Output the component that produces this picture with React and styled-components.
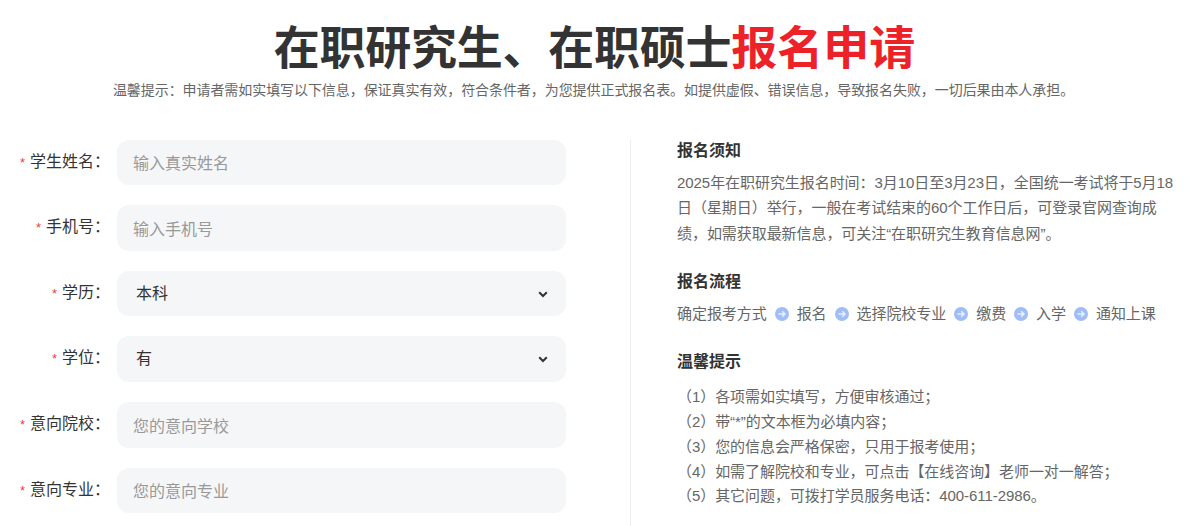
import React from 'react';
import styled, { createGlobalStyle } from 'styled-components';

const GlobalStyle = createGlobalStyle`
  html, body {
    margin: 0;
    padding: 0;
    height: 526px;
    overflow: hidden;
    background: #fff;
    font-family: "Liberation Sans", "Noto Sans CJK SC", sans-serif;
  }
`;

const fields = [
  { label: '学生姓名', placeholder: '输入真实姓名' },
  { label: '手机号', placeholder: '输入手机号' },
  { label: '学历', options: ['本科', '专科', '硕士'] },
  { label: '学位', options: ['有', '无'] },
  { label: '意向院校', placeholder: '您的意向学校' },
  { label: '意向专业', placeholder: '您的意向专业' },
];

const steps = ['确定报考方式', '报名', '选择院校专业', '缴费', '入学', '通知上课'];

const tips = [
  '（1）各项需如实填写，方便审核通过；',
  '（2）带“*”的文本框为必填内容；',
  '（3）您的信息会严格保密，只用于报考使用；',
  '（4）如需了解院校和专业，可点击【在线咨询】老师一对一解答；',
  '（5）其它问题，可拨打学员服务电话：400-611-2986。',
];

const ArrowIcon = () => (
  <svg width="14" height="14" viewBox="0 0 14 14">
    <circle cx="7" cy="7" r="7" fill="#a0bdf8" />
    <path d="M3.5 7H10M7.2 4.2L10 7L7.2 9.8" fill="none" stroke="#e8effd" strokeWidth="1.5" />
  </svg>
);

const Chevron = () => (
  <ChevronWrap>
    <svg width="12" height="12" viewBox="0 0 12 12">
      <path d="M2.2 4.2L6 8L9.8 4.2" fill="none" stroke="#333" strokeWidth="2" />
    </svg>
  </ChevronWrap>
);

const App = () => {
  return (
    <Page>
      <GlobalStyle />
      <Header>
        <Title><Dark>在职研究生、在职硕士</Dark><Red>报名申请</Red></Title>
        <Subtitle>温馨提示：申请者需如实填写以下信息，保证真实有效，符合条件者，为您提供正式报名表。如提供虚假、错误信息，导致报名失败，一切后果由本人承担。</Subtitle>
      </Header>
      <Body>
        <Form>
          {fields.map((f) => (
            <Row key={f.label}>
              <Label><Star>*</Star>{f.label}：</Label>
              {f.options ? (
                <SelectWrap>
                  <Select defaultValue={f.options[0]}>
                    {f.options.map((o) => <option key={o}>{o}</option>)}
                  </Select>
                  <Chevron />
                </SelectWrap>
              ) : (
                <Input placeholder={f.placeholder} />
              )}
            </Row>
          ))}
        </Form>
        <Side>
          <Section>
            <Heading>报名须知</Heading>
            <Text>2025年在职研究生报名时间：3月10日至3月23日，全国统一考试将于5月18日（星期日）举行，一般在考试结束的60个工作日后，可登录官网查询成绩，如需获取最新信息，可关注“在职研究生教育信息网”。</Text>
          </Section>
          <Section>
            <Heading>报名流程</Heading>
            <Steps>
              {steps.map((s, i) => (
                <React.Fragment key={s}>
                  <span>{s}</span>
                  {i < steps.length - 1 && <ArrowIcon />}
                </React.Fragment>
              ))}
            </Steps>
          </Section>
          <Section>
            <Heading>温馨提示</Heading>
            <Tips>
              {tips.map((t) => <Tip key={t}>{t}</Tip>)}
            </Tips>
          </Section>
        </Side>
      </Body>
    </Page>
  );
};

export default App;

const Page = styled.div`
  width: 1187px;
  height: 526px;
  overflow: hidden;
`;

const Header = styled.header`
  text-align: center;
  padding-top: 18px;
  height: 123px;
  box-sizing: border-box;
`;

const Title = styled.h1`
  margin: 0;
  padding-left: 2px;
  font-size: 46px;
  line-height: 60px;
  font-weight: 700;
  color: #333;
`;

const Dark = styled.span`
  letter-spacing: -0.25px;
`;

const Red = styled.span`
  color: #ed2128;
`;

const Subtitle = styled.p`
  margin: -2px 0 0;
  font-size: 14px;
  line-height: 28px;
  letter-spacing: -0.07px;
  color: #666;
`;

const Body = styled.div`
  display: flex;
  padding-top: 16.7px;
`;

const Form = styled.div`
  width: 630px;
  box-sizing: border-box;
  display: flex;
  flex-direction: column;
  gap: 20px;
  flex-shrink: 0;
`;

const Row = styled.div`
  display: flex;
  align-items: flex-start;
`;

const Label = styled.label`
  width: 110px;
  flex-shrink: 0;
  text-align: right;
  font-size: 16px;
  line-height: 44.4px;
  color: #333;
`;

const Star = styled.span`
  color: #ee3d43;
  margin-right: 5px;
  font-size: 13px;
`;

const Input = styled.input`
  margin-left: 7px;
  width: 449px;
  height: 45.6px;
  box-sizing: border-box;
  border: 0;
  border-radius: 12px;
  background: #f5f6f8;
  padding: 4px 16px 0;
  font: inherit;
  font-size: 16px;
  color: #333;
  outline: none;

  &::placeholder {
    color: #999;
    opacity: 1;
  }
`;

const SelectWrap = styled.div`
  position: relative;
  margin-left: 7px;
  width: 449px;
  height: 45.6px;
`;

const Select = styled.select`
  appearance: none;
  width: 100%;
  height: 100%;
  border: 0;
  border-radius: 12px;
  background: #f5f6f8;
  padding: 0 20px 1px 19px;
  font: inherit;
  font-size: 16px;
  color: #333;
  outline: none;
`;

const ChevronWrap = styled.span`
  position: absolute;
  right: 17px;
  top: 17px;
  display: flex;
  pointer-events: none;
`;

const Side = styled.div`
  flex: 1;
  border-left: 1px solid #eee;
  margin-right: 8px;
  padding-left: 46px;
  height: 400px;
  display: flex;
  flex-direction: column;
  gap: 24.5px;
`;

const Section = styled.section``;

const Heading = styled.h3`
  margin: 0 0 9px;
  padding-top: 1px;
  font-size: 16px;
  line-height: 20px;
  font-weight: 700;
  color: #333;
`;

const Text = styled.p`
  margin: 0;
  font-size: 15px;
  line-height: 25.5px;
  letter-spacing: -0.06px;
  color: #666;
`;

const Steps = styled.div`
  display: flex;
  align-items: center;
  gap: 8px;
  font-size: 15px;
  line-height: 26px;
  letter-spacing: -0.06px;
  color: #666;
`;

const Tips = styled.ul`
  list-style: none;
  margin: 13px 0 0;
  padding: 0;
`;

const Tip = styled.li`
  font-size: 15px;
  line-height: 24.8px;
  letter-spacing: -0.06px;
  color: #666;
`;
